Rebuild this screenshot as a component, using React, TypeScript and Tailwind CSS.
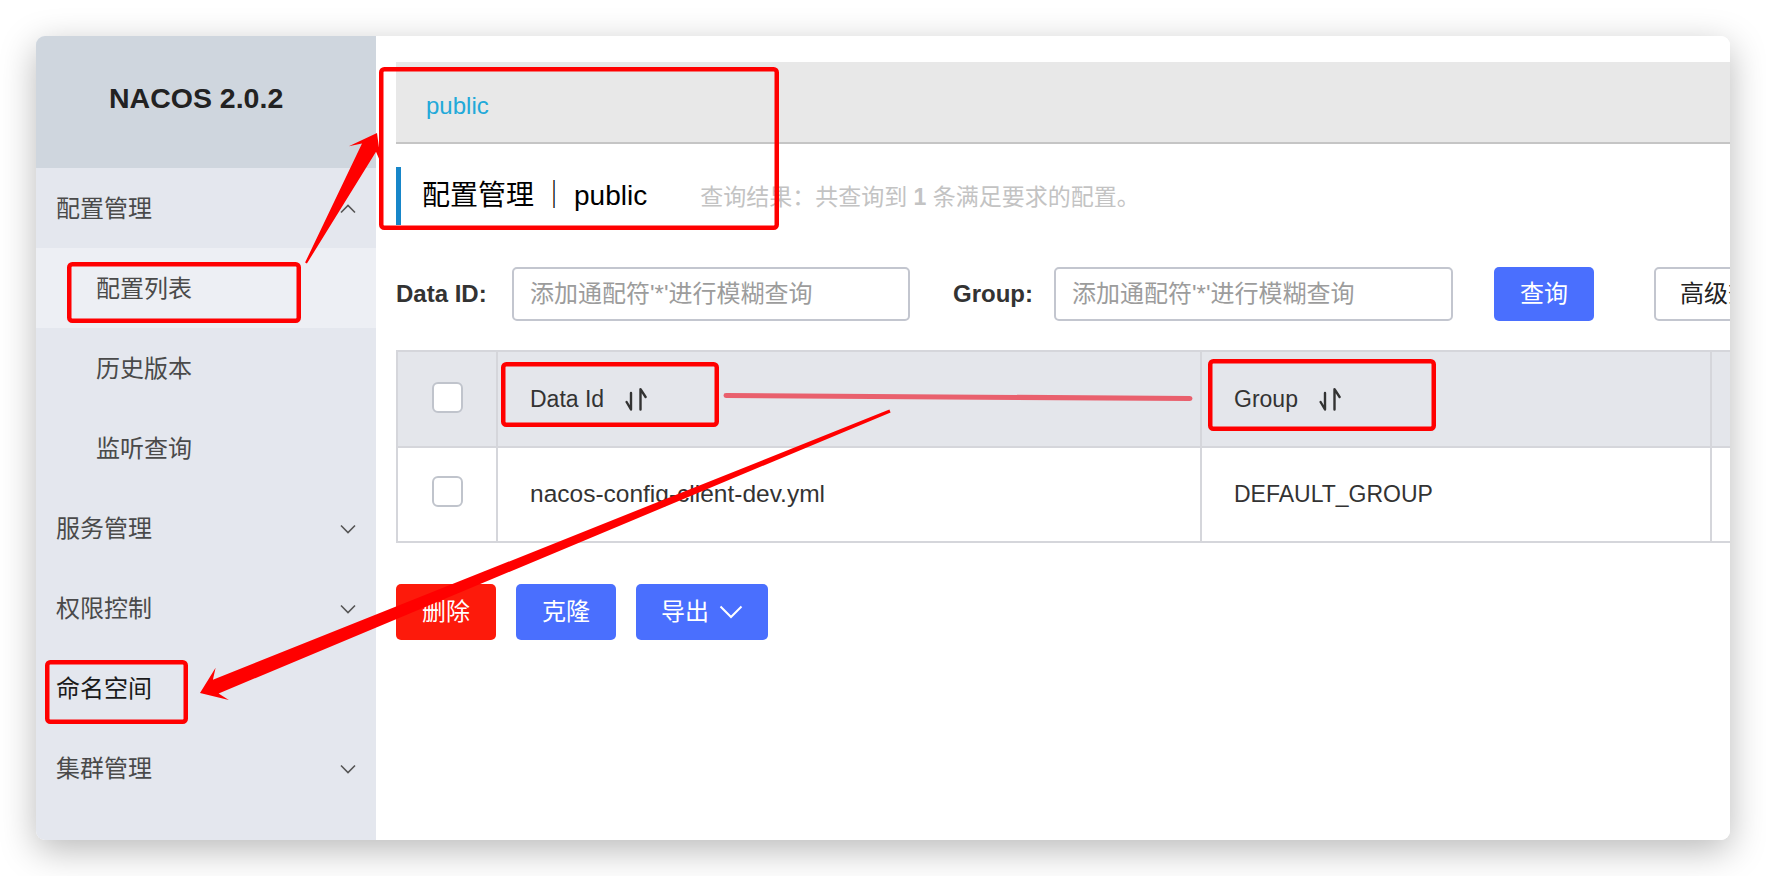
import React from "react";

function Chevron({ up = false }: { up?: boolean }) {
  return (
    <svg width="16" height="10" viewBox="0 0 16 10" className="shrink-0">
      {up ? (
        <polyline points="1,8.5 8,1.5 15,8.5" fill="none" stroke="#555" strokeWidth="1.6" />
      ) : (
        <polyline points="1,1.5 8,8.5 15,1.5" fill="none" stroke="#555" strokeWidth="1.6" />
      )}
    </svg>
  );
}

function SortIcon() {
  return (
    <svg width="22" height="23" viewBox="0 0 22 23" className="shrink-0 ml-[21px]">
      <path d="M6 5 V21.5 L1.6 14" fill="none" stroke="#333" strokeWidth="2.4" strokeLinecap="round" strokeLinejoin="round" />
      <path d="M15.5 21.5 V1.2 L20.6 9" fill="none" stroke="#333" strokeWidth="2.4" strokeLinecap="round" strokeLinejoin="round" />
    </svg>
  );
}

function Checkbox() {
  return <div className="w-[31px] h-[31px] rounded-[6px] border-2 border-[#c0c4cc] bg-white" />;
}

function TopItem({ label, up, dark }: { label: string; up?: boolean; dark?: boolean }) {
  return (
    <div className="h-[80px] flex items-center justify-between pl-[20px] pr-[20px] pt-[2px]">
      <span className={dark ? "text-[24px] text-[#1a1a1a]" : "text-[24px] text-[#4a4a4a]"}>{label}</span>
      {up === undefined ? null : <Chevron up={up} />}
    </div>
  );
}

function SubItem({ label, active }: { label: string; active?: boolean }) {
  return (
    <div className={active ? "h-[80px] flex items-center pl-[60px] pt-[2px] bg-[#edeff4]" : "h-[80px] flex items-center pl-[60px] pt-[2px]"}>
      <span className="text-[24px] text-[#4a4a4a]">{label}</span>
    </div>
  );
}

function Sidebar() {
  return (
    <div className="w-[340px] shrink-0 bg-[#e4e7ee] flex flex-col">
      <div className="h-[132px] bg-[#cfd6de] flex items-center pl-[73px] pb-[7px]">
        <span className="text-[28.5px] font-bold text-[#222] leading-none">NACOS 2.0.2</span>
      </div>
      <TopItem label="配置管理" up={true} />
      <SubItem label="配置列表" active />
      <SubItem label="历史版本" />
      <SubItem label="监听查询" />
      <TopItem label="服务管理" up={false} />
      <TopItem label="权限控制" up={false} />
      <TopItem label="命名空间" dark />
      <TopItem label="集群管理" up={false} />
    </div>
  );
}

function Main() {
  return (
    <div className="flex-1 min-w-0 bg-white pl-[20px] pt-[26px] overflow-hidden">
      <div className="h-[82px] bg-[#e8e8e8] border-b-2 border-[#c5c5c5] flex items-center pl-[30px] pt-[7px]">
        <span className="text-[24px] text-[#22a9d9]">public</span>
      </div>

      <div className="mt-[23px] h-[58px] border-l-[5px] border-[#1786c9] flex items-center pl-[21px]">
        <div className="flex items-baseline whitespace-nowrap">
          <span className="text-[28px] text-black">配置管理</span>
          <span className="text-[28px] text-black ml-[6px] mr-[6px]">｜</span>
          <span className="text-[28px] text-black">public</span>
          <span className="text-[23px] text-[#c3c3c3] ml-[53px]">
            查询结果：共查询到 <b className="font-bold">1</b> 条满足要求的配置。
          </span>
        </div>
      </div>

      <div className="mt-[42px] h-[54px] flex items-center whitespace-nowrap">
        <span className="w-[116px] shrink-0 text-[24px] font-bold text-[#333]">Data ID:</span>
        <div className="w-[398px] h-[54px] shrink-0 border-2 border-[#c3c6cf] rounded-[5px] flex items-center pl-[16px]">
          <span className="text-[24px] text-[#9c9c9c]">添加通配符'*'进行模糊查询</span>
        </div>
        <span className="ml-[43px] w-[101px] shrink-0 text-[24px] font-bold text-[#333]">Group:</span>
        <div className="w-[399px] h-[54px] shrink-0 border-2 border-[#c3c6cf] rounded-[5px] flex items-center pl-[16px]">
          <span className="text-[24px] text-[#9c9c9c]">添加通配符'*'进行模糊查询</span>
        </div>
        <div className="ml-[41px] w-[100px] h-[54px] shrink-0 bg-[#4a6ffe] rounded-[5px] flex items-center justify-center">
          <span className="text-[24px] text-white">查询</span>
        </div>
        <div className="ml-[60px] w-[150px] h-[54px] shrink-0 bg-white border-2 border-[#c3c6cf] rounded-[5px] flex items-center pl-[24px]">
          <span className="text-[24px] text-[#222]">高级查询</span>
        </div>
      </div>

      <div className="mt-[29px] w-[1400px] border-2 border-[#d5d6db]">
        <div className="flex h-[96px] bg-[#e4e6eb] border-b-2 border-[#d5d6db]">
          <div className="w-[100px] shrink-0 flex items-center justify-center border-r-2 border-[#d5d6db] pb-[3px]">
            <Checkbox />
          </div>
          <div className="w-[704px] shrink-0 flex items-center pl-[32px] border-r-2 border-[#d5d6db]">
            <span className="text-[23px] text-[#333]">Data Id</span>
            <SortIcon />
          </div>
          <div className="w-[510px] shrink-0 flex items-center pl-[32px] border-r-2 border-[#d5d6db]">
            <span className="text-[23px] text-[#333]">Group</span>
            <SortIcon />
          </div>
          <div className="flex-1" />
        </div>
        <div className="flex h-[93px] bg-white">
          <div className="w-[100px] shrink-0 flex items-center justify-center border-r-2 border-[#d5d6db] pb-[6px]">
            <Checkbox />
          </div>
          <div className="w-[704px] shrink-0 flex items-center pl-[32px] border-r-2 border-[#d5d6db]">
            <span className="text-[24.5px] text-[#333]">nacos-config-client-dev.yml</span>
          </div>
          <div className="w-[510px] shrink-0 flex items-center pl-[32px] border-r-2 border-[#d5d6db]">
            <span className="text-[23px] text-[#333]">DEFAULT_GROUP</span>
          </div>
          <div className="flex-1" />
        </div>
      </div>

      <div className="mt-[41px] flex gap-[20px]">
        <div className="w-[100px] h-[56px] bg-[#fd1a0b] rounded-[5px] flex items-center justify-center">
          <span className="text-[24px] text-white">删除</span>
        </div>
        <div className="w-[100px] h-[56px] bg-[#4a6ffe] rounded-[5px] flex items-center justify-center">
          <span className="text-[24px] text-white">克隆</span>
        </div>
        <div className="w-[132px] h-[56px] bg-[#4a6ffe] rounded-[5px] flex items-center justify-center gap-[10px]">
          <span className="text-[24px] text-white">导出</span>
          <svg width="24" height="14" viewBox="0 0 24 14">
            <polyline points="1.5,1.5 12,12 22.5,1.5" fill="none" stroke="#fff" strokeWidth="2" />
          </svg>
        </div>
      </div>
    </div>
  );
}

function Annotations() {
  const red = "#ff0000";
  return (
    <svg className="absolute left-0 top-0 pointer-events-none" width="1766" height="876" viewBox="0 0 1766 876">
      <rect x="381.25" y="69.25" width="395.5" height="158.5" rx="3" fill="none" stroke={red} strokeWidth="4.5" />
      <rect x="69.25" y="264.25" width="229.5" height="56.5" rx="3" fill="none" stroke={red} strokeWidth="4.5" />
      <rect x="47.25" y="662.25" width="138.5" height="59.5" rx="3" fill="none" stroke={red} strokeWidth="4.5" />
      <rect x="503.25" y="364.25" width="213.5" height="60.5" rx="3" fill="none" stroke={red} strokeWidth="4.5" />
      <rect x="1210.25" y="361.25" width="223.5" height="67.5" rx="3" fill="none" stroke={red} strokeWidth="4.5" />
      <line x1="726" y1="395.5" x2="1190" y2="398.5" stroke="#e9606d" strokeWidth="5" strokeLinecap="round" />
      <polygon
        points="305.1,262.5 362,143.6 348.8,146.2 377,133 381.2,163.8 376,151.8 306.9,263.5"
        fill={red}
      />
      <polygon
        points="889.4,409.6 212.9,679.7 215.6,667.7 200,693 228.8,700.1 218.6,693.5 890.6,412.4"
        fill={red}
      />
    </svg>
  );
}

export default function App() {
  return (
    <div className="relative w-[1766px] h-[876px] bg-white overflow-hidden [font-family:'Liberation_Sans','Noto_Sans_CJK_SC',sans-serif]">
      <div className="pt-[36px] pl-[36px]">
        <div className="flex w-[1694px] h-[804px] rounded-[9px] overflow-hidden bg-white shadow-[0_10px_36px_rgba(0,0,0,0.28)]">
          <Sidebar />
          <Main />
        </div>
      </div>
      <Annotations />
    </div>
  );
}
